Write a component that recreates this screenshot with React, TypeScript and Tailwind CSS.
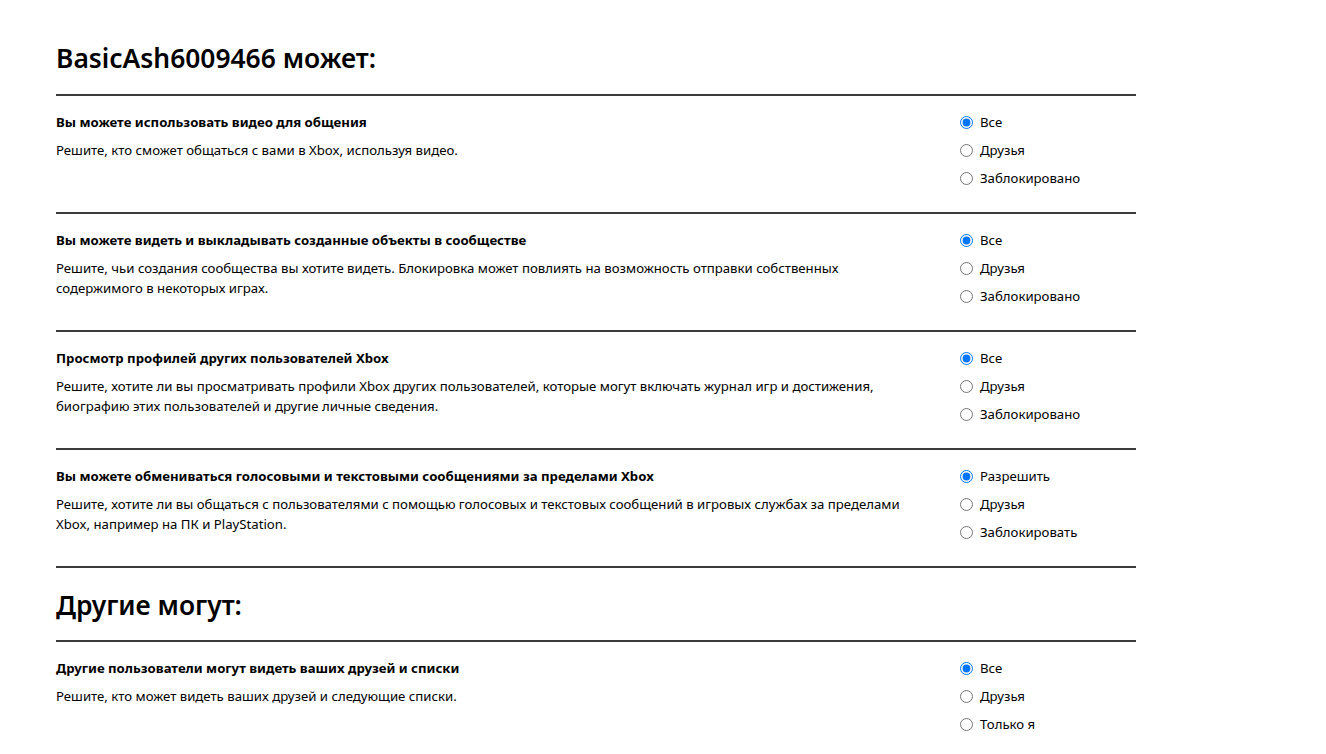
type Setting = {
  title: string;
  desc: string;
  options: string[];
};

const mine: Setting[] = [
  {
    title: "Вы можете использовать видео для общения",
    desc: "Решите, кто сможет общаться с вами в Xbox, используя видео.",
    options: ["Все", "Друзья", "Заблокировано"],
  },
  {
    title: "Вы можете видеть и выкладывать созданные объекты в сообществе",
    desc: "Решите, чьи создания сообщества вы хотите видеть. Блокировка может повлиять на возможность отправки собственных содержимого в некоторых играх.",
    options: ["Все", "Друзья", "Заблокировано"],
  },
  {
    title: "Просмотр профилей других пользователей Xbox",
    desc: "Решите, хотите ли вы просматривать профили Xbox других пользователей, которые могут включать журнал игр и достижения, биографию этих пользователей и другие личные сведения.",
    options: ["Все", "Друзья", "Заблокировано"],
  },
  {
    title: "Вы можете обмениваться голосовыми и текстовыми сообщениями за пределами Xbox",
    desc: "Решите, хотите ли вы общаться с пользователями с помощью голосовых и текстовых сообщений в игровых службах за пределами Xbox, например на ПК и PlayStation.",
    options: ["Разрешить", "Друзья", "Заблокировать"],
  },
];

const others: Setting[] = [
  {
    title: "Другие пользователи могут видеть ваших друзей и списки",
    desc: "Решите, кто может видеть ваших друзей и следующие списки.",
    options: ["Все", "Друзья", "Только я"],
  },
];

function SettingRow({ s, name }: { s: Setting; name: string }) {
  return (
    <div className="flex border-t-2 border-[#3c3c3c] pt-3 pb-5">
      <div className="w-[860px] shrink-0">
        <p className="h-7 flex items-center font-bold translate-y-px">{s.title}</p>
        <p className="mt-1 leading-5">{s.desc}</p>
      </div>
      <div className="ml-[44px] flex flex-col">
        {s.options.map((o, i) => (
          <label key={o} className="h-7 flex items-center gap-[7px]">
            <input
              type="radio"
              name={name}
              defaultChecked={i === 0}
              className="m-0 w-[13px] h-[13px] accent-[#0075ff]"
            />
            <span className="translate-y-px">{o}</span>
          </label>
        ))}
      </div>
    </div>
  );
}

export default function App() {
  return (
    <div className="bg-white min-h-[754px] text-black text-[13.2px] font-['Segoe_UI','Noto_Sans',sans-serif]">
      <div className="w-[1080px] ml-14 pt-[40px]">
        <h1 className="text-[26.4px] font-semibold leading-9 pb-[18px]">BasicAsh6009466 может:</h1>
        {mine.map((s, i) => (
          <SettingRow key={i} s={s} name={"m" + i} />
        ))}
        <h2 className="border-t-2 border-[#3c3c3c] text-[26.4px] font-semibold leading-9 pt-[19px] pb-[17px]">
          Другие могут:
        </h2>
        {others.map((s, i) => (
          <SettingRow key={i} s={s} name={"o" + i} />
        ))}
      </div>
    </div>
  );
}
